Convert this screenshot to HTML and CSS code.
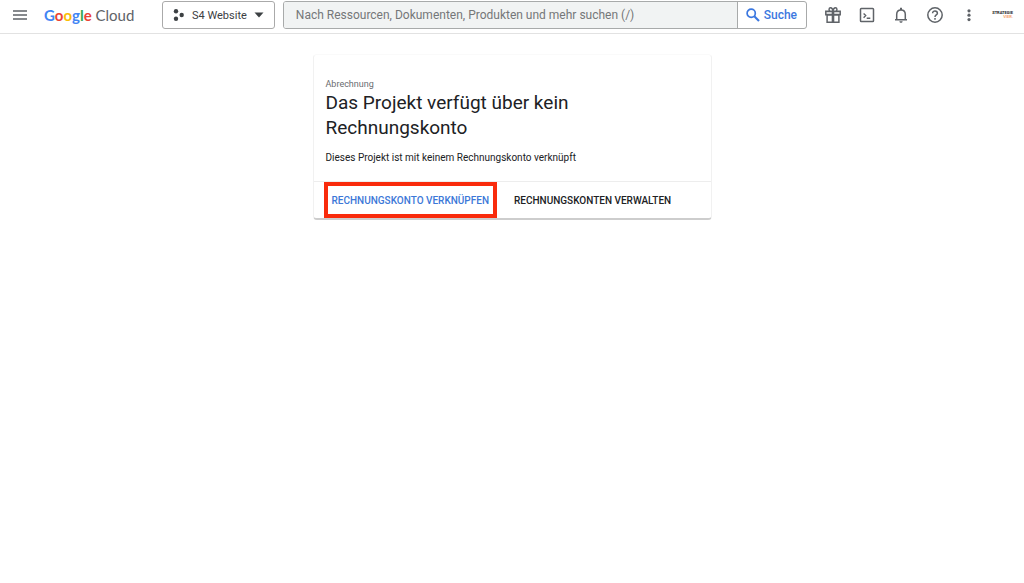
FILE: index.html
```html
<!DOCTYPE html>
<html lang="de">
<head>
<meta charset="utf-8">
<meta name="viewport" content="width=device-width, initial-scale=1">
<title>Abrechnung – Google Cloud</title>
<link rel="stylesheet" href="styles.css">
</head>
<body>
<header class="topbar">
  <button class="icon-button menu" type="button" aria-label="Navigationsmenü">
    <svg width="16" height="12" viewBox="0 0 16 12"><path d="M1 2h14M1 6h14M1 10h14" fill="none" stroke="currentColor" stroke-width="1.6"/></svg>
  </button>
  <a class="logo" href="#"><span class="google"><span class="blue">G</span><span class="red">o</span><span class="yellow">o</span><span class="blue">g</span><span class="green">l</span><span class="red">e</span></span> <span class="cloud">Cloud</span></a>
  <button class="project" type="button">
    <svg width="12" height="12" viewBox="0 0 12 12" fill="currentColor"><circle cx="3" cy="2.3" r="2.2"/><circle cx="8.7" cy="6" r="2.2"/><circle cx="3" cy="9.7" r="2.2"/></svg>
    <span>S4 Website</span>
    <svg class="caret" width="10" height="6" viewBox="0 0 10 6" fill="currentColor"><path d="M.5.5h9L5 5.5z"/></svg>
  </button>
  <form class="search" role="search">
    <input class="search-input" type="search" aria-label="Suche" placeholder="Nach Ressourcen, Dokumenten, Produkten und mehr suchen (/)">
    <button class="search-button" type="button">
      <svg width="14" height="14" viewBox="0 0 14 14" fill="none" stroke="currentColor"><circle cx="5.2" cy="5.2" r="4.1" stroke-width="1.7"/><path d="M8.3 8.3l4.7 4.7" stroke-width="2.1"/></svg>
      <span>Suche</span>
    </button>
  </form>
  <nav class="tools" aria-label="Werkzeuge">
    <button class="icon-button" type="button" aria-label="Geschenk">
      <svg width="18" height="18" viewBox="0 0 18 18" fill="none" stroke="currentColor" stroke-width="1.5"><path fill="#d5d6d7" d="M1.8 5.2h14.4v3.5H1.8z"/><path d="M3.1 8.7h11.8v7.5H3.1z"/><path d="M9 5.2v11" stroke-width="2.6"/><path d="M9 5.1C8.7 3 7.8 1.8 6.6 1.8 4.6 1.8 4.7 4.8 6 5.1M9 5.1c.3-2.1 1.2-3.3 2.4-3.3 2 0 1.9 3 .6 3.3"/></svg>
    </button>
    <button class="icon-button" type="button" aria-label="Cloud Shell">
      <svg width="18" height="18" viewBox="0 0 18 18" fill="none" stroke="currentColor"><rect x="2.5" y="2.5" width="13" height="13" rx=".8" stroke-width="1.5"/><path d="M5.6 7.5l2.1 2.1-2.1 2.1M8.7 12.2h3.6" stroke-width="1.4"/></svg>
    </button>
    <button class="icon-button" type="button" aria-label="Benachrichtigungen">
      <svg width="18" height="18" viewBox="0 0 18 18" fill="none" stroke="currentColor" stroke-width="1.5"><path d="M3 13.8h12M4.7 13.8V8.4C4.7 5.8 6.4 4 9 4s4.3 1.8 4.3 4.4v5.4"/><path d="M9 1.7v2.2" stroke-width="2"/><path d="M7.4 15.2h3.2c0 2.1-3.2 2.1-3.2 0z" fill="currentColor" stroke="none"/></svg>
    </button>
    <button class="icon-button" type="button" aria-label="Hilfe">
      <svg width="18" height="18" viewBox="0 0 18 18" fill="none" stroke="currentColor" stroke-width="1.5"><circle cx="9" cy="9" r="7.2"/><path d="M6.6 7.3c0-3.3 4.8-3 4.8-.1 0 1.7-2.4 1.8-2.4 3.7M9 12v1.7"/></svg>
    </button>
    <button class="icon-button" type="button" aria-label="Mehr">
      <svg width="18" height="18" viewBox="0 0 18 18" fill="currentColor"><circle cx="9" cy="4.8" r="1.6"/><circle cx="9" cy="9.2" r="1.6"/><circle cx="9" cy="13.6" r="1.6"/></svg>
    </button>
    <button class="account" type="button"><span class="account-name">STRATEGIE</span><span class="account-suffix">VIER.</span></button>
  </nav>
</header>
<main class="content">
  <section class="card">
    <div class="card-body">
      <p class="eyebrow">Abrechnung</p>
      <h1 class="title">Das Projekt verfügt über kein Rechnungskonto</h1>
      <p class="description">Dieses Projekt ist mit keinem Rechnungskonto verknüpft</p>
    </div>
    <div class="card-actions">
      <button class="action highlighted" type="button">RECHNUNGSKONTO VERKNÜPFEN</button>
      <button class="action" type="button">RECHNUNGSKONTEN VERWALTEN</button>
    </div>
  </section>
</main>
</body>
</html>
```
FILE: styles.css
```css
* {
  box-sizing: border-box;
}

body {
  margin: 0;
  background: #fff;
  color: #202124;
  font-family: Roboto, "Liberation Sans", sans-serif;
  font-size: 10px;
}

button {
  margin: 0;
  padding: 0;
  border: 0;
  background: none;
  color: inherit;
  font: inherit;
}

svg {
  display: block;
  flex: none;
}

.topbar {
  display: flex;
  align-items: center;
  padding: 1px 11px 4px 12px;
  border-bottom: 1px solid #e2e2e2;
}

.icon-button {
  display: flex;
  align-items: center;
  justify-content: center;
  flex: none;
  color: #5f6368;
}

.logo {
  flex: none;
  width: 118px;
  margin-left: 16px;
  color: #5f6368;
  font-family: Lato, sans-serif;
  font-size: 15px;
  line-height: 20px;
  text-decoration: none;
  white-space: nowrap;
}

.google {
  font-weight: 700;
}

.blue { color: #4285f4; }
.red { color: #ea4335; }
.yellow { color: #fbbc04; }
.green { color: #34a853; }

.project {
  display: flex;
  align-items: center;
  flex: none;
  gap: 7px;
  height: 28px;
  padding: 0 10px;
  border: 1px solid #aaa;
  border-radius: 3px;
  color: #3c4043;
  font-size: 11px;
}

.project .caret {
  margin-left: auto;
}

.search {
  display: flex;
  flex: 1;
  min-width: 0;
  height: 28px;
  margin-left: 8px;
  border: 1px solid #a8aaaa;
  border-radius: 3px;
  overflow: hidden;
}

.search-input {
  flex: 1;
  min-width: 0;
  margin: 0;
  padding: 0 12px;
  border: 0;
  background: #f1f3f3;
  color: #202124;
  font: 12px Roboto, sans-serif;
}

.search-input::placeholder {
  color: #757779;
  opacity: 1;
}

.search-button {
  display: flex;
  align-items: center;
  gap: 4px;
  padding: 0 9px 0 8px;
  border-left: 1px solid #a8aaaa;
  color: #3c78e0;
  font-size: 12px;
  font-weight: 500;
}

.tools {
  display: flex;
  align-items: center;
  flex: none;
  gap: 16px;
  margin-left: 17px;
}

.account {
  display: flex;
  flex-direction: column;
  align-items: flex-end;
  width: 22px;
  margin-left: -3px;
  font-size: 4px;
  font-weight: 700;
  line-height: 4px;
}

.account-suffix {
  color: #f5a36b;
}

.content {
  display: flex;
  justify-content: center;
  padding: 20px 16px;
}

.card {
  width: 100%;
  max-width: 399px;
  border: 1px solid #f1f1f1;
  border-top-color: #fafafa;
  border-bottom: 2px solid #cdcdcd;
  border-radius: 4px;
}

.card-body {
  padding: 23px 12px 16px;
}

.eyebrow {
  margin: 0;
  color: #6a6c6f;
  font-size: 9px;
  line-height: 12px;
}

.title {
  max-width: 300px;
  margin: 0;
  font-size: 19px;
  font-weight: 400;
  line-height: 25px;
}

.description {
  margin: 11px 0 0;
  line-height: 14px;
}

.card-actions {
  display: flex;
  gap: 9px;
  padding: 0 10px;
  border-top: 1px solid #ededed;
}

.action {
  height: 36px;
  padding: 0 8px;
  font-weight: 500;
  white-space: nowrap;
}

.action.highlighted {
  padding: 0 4px;
  border: 4px solid #f92b0c;
  color: #3c78d8;
}
```
